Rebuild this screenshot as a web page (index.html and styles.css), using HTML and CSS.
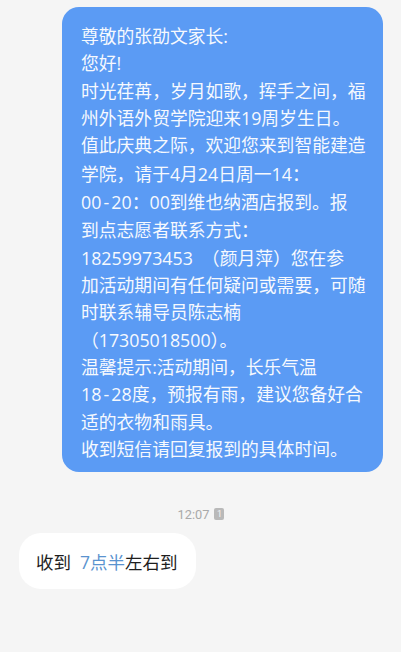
FILE: index.html
```html
<!DOCTYPE html>
<html lang="zh-CN">
<head>
<meta charset="utf-8">
<title>短信</title>
<link rel="stylesheet" href="styles.css">
</head>
<body>
<div class="chat">
  <div class="msg-out">
    <div class="line">尊敬的张劭文家长:</div>
    <div class="line">您好!</div>
    <div class="line">时光荏苒，岁月如歌，挥手之间，福</div>
    <div class="line">州外语外贸学院迎来19周岁生日。</div>
    <div class="line">值此庆典之际，欢迎您来到智能建造</div>
    <div class="line">学院，请于4月24日周一14<span class="colon">：</span></div>
    <div class="line">00<span class="dash">-</span>20<span class="colon">：</span>00到维也纳酒店报到。报</div>
    <div class="line">到点志愿者联系方式<span class="colon">：</span></div>
    <div class="line">18259973453<span class="gap"> </span>（颜月萍）您在参</div>
    <div class="line">加活动期间有任何疑问或需要，可随</div>
    <div class="line">时联系辅导员陈志楠</div>
    <div class="line">（17305018500）。</div>
    <div class="line">温馨提示:活动期间，长乐气温</div>
    <div class="line">18<span class="dash">-</span>28度，预报有雨，建议您备好合</div>
    <div class="line">适的衣物和雨具。</div>
    <div class="line">收到短信请回复报到的具体时间。</div>
  </div>
  <div class="stamp">
    <span class="time">12:07</span>
    <span class="sim">1</span>
  </div>
  <div class="msg-in">收到<span class="link">7点半</span>左右到</div>
</div>
</body>
</html>
```

FILE: styles.css
```css
html, body {
  margin: 0;
  padding: 0;
  background: #f5f5f5;
}
body {
  width: 401px;
  height: 652px;
  overflow: hidden;
  font-family: "Noto Sans CJK SC", "Noto Sans", sans-serif;
}
.chat {
  display: flex;
  flex-direction: column;
  padding: 7px 18px 0 19px;
}
.msg-out {
  align-self: flex-end;
  box-sizing: border-box;
  width: 321px;
  height: 465px;
  padding: 16px 0 0 19px;
  background: #5b9bf4;
  border-radius: 17px;
  color: #f6f9fe;
  font-family: "Open Sans", "Noto Sans CJK SC", sans-serif;
  font-size: 17.8px;
  line-height: 27.33px;
}
.line {
  white-space: nowrap;
}
.colon {
  font-family: "Noto Sans CJK JP", "Noto Sans CJK SC", sans-serif;
}
.dash {
  display: inline-block;
  width: 10px;
  text-align: center;
}
.gap {
  display: inline-block;
  width: 9px;
}
.stamp {
  display: flex;
  justify-content: center;
  align-items: center;
  gap: 5px;
  margin-top: 35px;
  height: 16px;
}
.time {
  color: #a9a9a9;
  font-family: "Roboto", "Noto Sans", sans-serif;
  font-size: 12.8px;
  line-height: 16px;
}
.sim {
  display: flex;
  align-items: center;
  justify-content: center;
  width: 10px;
  height: 12px;
  border-radius: 2px;
  background: #b9b9b9;
  color: #f4f4f4;
  font-family: "Roboto", sans-serif;
  font-size: 9px;
  line-height: 12px;
  margin-top: -3px;
}
.msg-in {
  align-self: flex-start;
  margin-top: 10px;
  height: 56px;
  box-sizing: border-box;
  padding: 0 18px 0 17px;
  display: flex;
  align-items: center;
  white-space: pre;
  background: #ffffff;
  border-radius: 22px;
  color: #1e1e1e;
  font-family: "Open Sans", "Noto Sans CJK SC", sans-serif;
  font-size: 17.5px;
}
.link {
  color: #5a93cf;
  margin-left: 9px;
}
```
